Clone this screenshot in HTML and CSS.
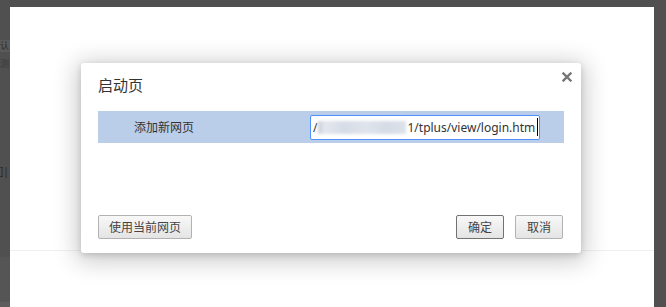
FILE: index.html
```html
<!DOCTYPE html>
<html lang="zh-CN">
<head>
    <meta charset="UTF-8">
    <meta name="viewport" content="width=device-width, initial-scale=1.0">
    <title>启动页</title>
    <link rel="stylesheet" href="styles.css">
</head>
<body>
    <div class="side side-left">
        <div class="side-item side-tab">认</div>
        <div class="side-item side-note">测</div>
        <div class="side-item side-mark">]|</div>
        <div class="side-fill"></div>
        <div class="side-foot"></div>
    </div>

    <div class="page">
        <div class="page-rule"></div>

        <div class="dialog">
            <div class="dialog-head">
                <h2 class="dialog-title">启动页</h2>
                <button type="button" class="close" title="关闭">
                    <svg width="10" height="10" viewBox="0 0 10 10">
                        <path d="M1.5 1.5 L8.5 8.5 M8.5 1.5 L1.5 8.5" stroke="#777" stroke-width="2.4" stroke-linecap="square"/>
                    </svg>
                </button>
            </div>

            <div class="dialog-body">
                <div class="page-row">
                    <span class="row-label">添加新网页</span>
                    <div class="url-field">
                        <span class="url-start">/</span>
                        <span class="url-blur"></span>
                        <span class="url-rest">1/tplus/view/login.htm</span>
                        <span class="caret"></span>
                    </div>
                </div>
            </div>

            <div class="dialog-foot">
                <button type="button" class="btn">使用当前网页</button>
                <div class="foot-right">
                    <button type="button" class="btn btn-default">确定</button>
                    <button type="button" class="btn">取消</button>
                </div>
            </div>
        </div>
    </div>

    <div class="side side-right"></div>
</body>
</html>
```

FILE: styles.css
```css
body {
    margin: 0;
    height: 307px;
    padding-top: 7px;
    box-sizing: border-box;
    display: flex;
    overflow: hidden;
    background-color: #505050;
    font-family: "Noto Sans", "Noto Sans CJK SC", sans-serif;
    color: #333;
}

/* dark strips around the page */
.side {
    flex: none;
}
.side-left {
    width: 10px;
    display: flex;
    flex-direction: column;
    overflow: hidden;
}
.side-right {
    width: 12px;
}
.side-item {
    font-size: 9px;
    line-height: 12px;
    white-space: nowrap;
    color: #2e2e2e;
}
.side-tab {
    margin-top: 33px;
    background-color: #5a5a5a;
}
.side-note {
    margin-top: 6px;
    color: #3a3a3a;
}
.side-mark {
    margin-top: 94px;
    font-size: 10px;
    line-height: 14px;
    color: #262626;
}
.side-fill {
    margin-top: 79px;
    height: 45px;
    background-color: #555;
}
.side-foot {
    flex: 1;
    background-color: #5d5d5d;
}

/* white page behind the dialog */
.page {
    flex: 1;
    position: relative;
    background-color: #fff;
}
.page-rule {
    margin-top: 243px;
    border-top: 1px solid #f0f0f0;
}

.dialog {
    position: absolute;
    left: 71px;
    top: 56px;
    width: 500px;
    height: 190px;
    box-sizing: border-box;
    padding: 12px 17px 14px 17px;
    display: flex;
    flex-direction: column;
    background-color: #fff;
    border-radius: 3px;
    box-shadow: 0 4px 23px 5px rgba(0, 0, 0, 0.2), 0 2px 6px rgba(0, 0, 0, 0.15);
}
.dialog-head {
    margin-bottom: 16px;
}
.dialog-title {
    margin: 0;
    font-size: 15px;
    line-height: 20px;
    font-weight: normal;
    color: #333;
}
.close {
    position: absolute;
    left: 481px;
    top: 9px;
    width: 10px;
    height: 10px;
    padding: 0;
    border: none;
    background: none;
    display: flex;
    cursor: pointer;
}

.page-row {
    height: 32px;
    display: flex;
    align-items: center;
    background-color: #bbcee9;
}
.row-label {
    width: 212px;
    box-sizing: border-box;
    padding-left: 36px;
    font-size: 12px;
    color: #333;
}
.url-field {
    width: 230px;
    height: 25px;
    box-sizing: border-box;
    padding-left: 2px;
    display: flex;
    align-items: center;
    overflow: hidden;
    white-space: nowrap;
    background-color: #fff;
    border: 1px solid #4d90fe;
    border-radius: 2px;
    font-size: 12px;
    color: #333;
}
.url-blur {
    width: 88px;
    height: 13px;
    margin-left: 1px;
    margin-right: 1px;
    background: linear-gradient(to right, #c9ced6, #e3e7ee 8%, #d6dce7 30%, #dfe4ec 55%, #d5dbe6 78%, #dde2ea);
    filter: blur(1.5px);
}
.caret {
    width: 1px;
    height: 18px;
    margin-left: 2px;
    background-color: #000;
}

.dialog-foot {
    margin-top: auto;
    padding-right: 1px;
    display: flex;
    justify-content: space-between;
    align-items: flex-end;
}
.foot-right {
    display: flex;
    gap: 11px;
}
.btn {
    height: 24px;
    min-width: 48px;
    padding: 0 10px;
    box-sizing: border-box;
    font-family: "Noto Sans", "Noto Sans CJK SC", sans-serif;
    font-size: 12px;
    color: #444;
    background: linear-gradient(#f8f8f8, #e4e4e4);
    border: 1px solid #b2b2b2;
    border-radius: 2px;
    cursor: pointer;
}
.btn-default {
    border-color: #727272;
}
```
